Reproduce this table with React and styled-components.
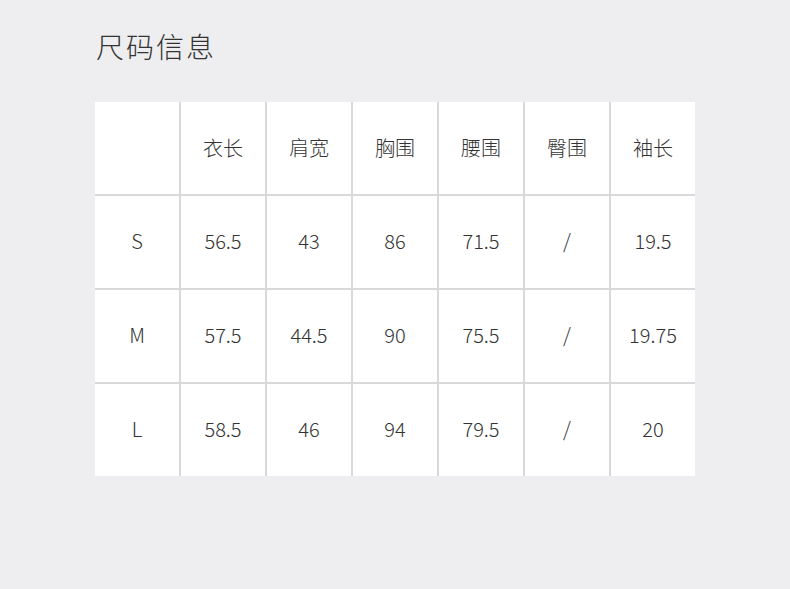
import React from "react";
import styled, { createGlobalStyle } from "styled-components";

const Global = createGlobalStyle`
  html, body { margin: 0; padding: 0; background: #eeeef0; }
  body { font-family: "Noto Sans CJK SC", "Noto Sans", sans-serif; color: #333; }
`;

const Page = styled.div`
  width: 790px;
  height: 589px;
  box-sizing: border-box;
  padding: 26px 95px 0 95px;
`;

const Title = styled.h1`
  margin: 0 0 0 1px;
  font-size: 28px;
  font-weight: 300;
  letter-spacing: 2px;
  line-height: 40px;
  color: #333;
`;

const Grid = styled.div`
  margin-top: 36px;
  display: grid;
  grid-template-columns: repeat(7, 84px);
  grid-auto-rows: 92px;
  gap: 2px;
  background: #d9d9d9;
  width: 600px;
`;

const Cell = styled.div`
  background: #fff;
  display: flex;
  align-items: center;
  justify-content: center;
  box-sizing: border-box;
  padding-bottom: ${(p) => (p.$head ? "2px" : "4px")};
  font-size: 20px;
  font-weight: 300;
  color: #333;
`;

const headers = ["", "衣长", "肩宽", "胸围", "腰围", "臀围", "袖长"];
const rows = [
  ["S", "56.5", "43", "86", "71.5", "/", "19.5"],
  ["M", "57.5", "44.5", "90", "75.5", "/", "19.75"],
  ["L", "58.5", "46", "94", "79.5", "/", "20"],
];

export default function App() {
  return (
    <>
      <Global />
      <Page>
        <Title>尺码信息</Title>
        <Grid>
          {headers.map((h, i) => (
            <Cell $head key={"h" + i}>{h}</Cell>
          ))}
          {rows.map((r, ri) =>
            r.map((c, ci) => <Cell key={ri + "-" + ci}>{c}</Cell>)
          )}
        </Grid>
      </Page>
    </>
  );
}
